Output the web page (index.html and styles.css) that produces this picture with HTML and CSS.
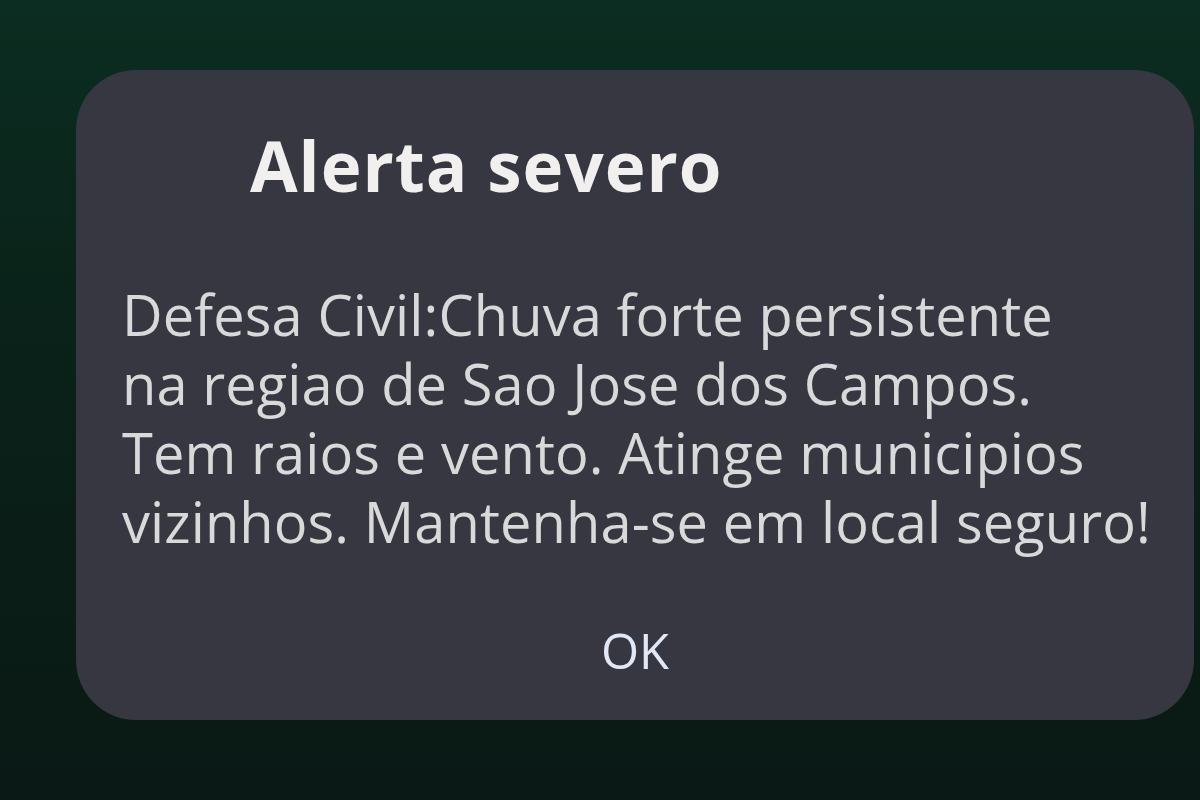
FILE: index.html
```html
<!DOCTYPE html>
<html lang="pt">
<head>
<meta charset="utf-8">
<link rel="stylesheet" href="styles.css">
</head>
<body>
<div class="screen">
  <div class="dialog">
    <h1 class="title">Alerta severo</h1>
    <p class="message">Defesa Civil:Chuva forte persistente<br>na regiao de Sao Jose dos Campos.<br>Tem raios e vento. Atinge municipios<br>vizinhos. Mantenha-se em local seguro!</p>
    <div class="actions"><span class="ok">OK</span></div>
  </div>
</div>
</body>
</html>
```
FILE: styles.css
```css
html, body {
  margin: 0;
  padding: 0;
  width: 1200px;
  height: 800px;
  overflow: hidden;
}
.screen {
  width: 1200px;
  height: 800px;
  box-sizing: border-box;
  padding: 70px 6px 0 76px;
  background: linear-gradient(180deg, #0c2d21 0%, #0a2219 40%, #0a1915 100%);
}
.dialog {
  width: 1118px;
  height: 650px;
  box-sizing: border-box;
  background: #363741;
  border-radius: 60px;
  padding: 0 0 0 46px;
  display: flex;
  flex-direction: column;
  font-family: "Open Sans", "DejaVu Sans", sans-serif;
}
.title {
  margin: 50px 0 0 128px;
  font-size: 69px;
  line-height: 90px;
  font-weight: 700;
  letter-spacing: 1px;
  color: #f1f0ee;
}
.message {
  margin: 70px 0 0 0;
  font-size: 56px;
  line-height: 69px;
  font-weight: 400;
  letter-spacing: 0.1px;
  color: #d9d9d9;
}
.actions {
  display: flex;
  justify-content: center;
  margin-top: 64px;
  padding-right: 46px;
}
.ok {
  font-size: 49px;
  line-height: 60px;
  color: #e0e7f6;
}
```
